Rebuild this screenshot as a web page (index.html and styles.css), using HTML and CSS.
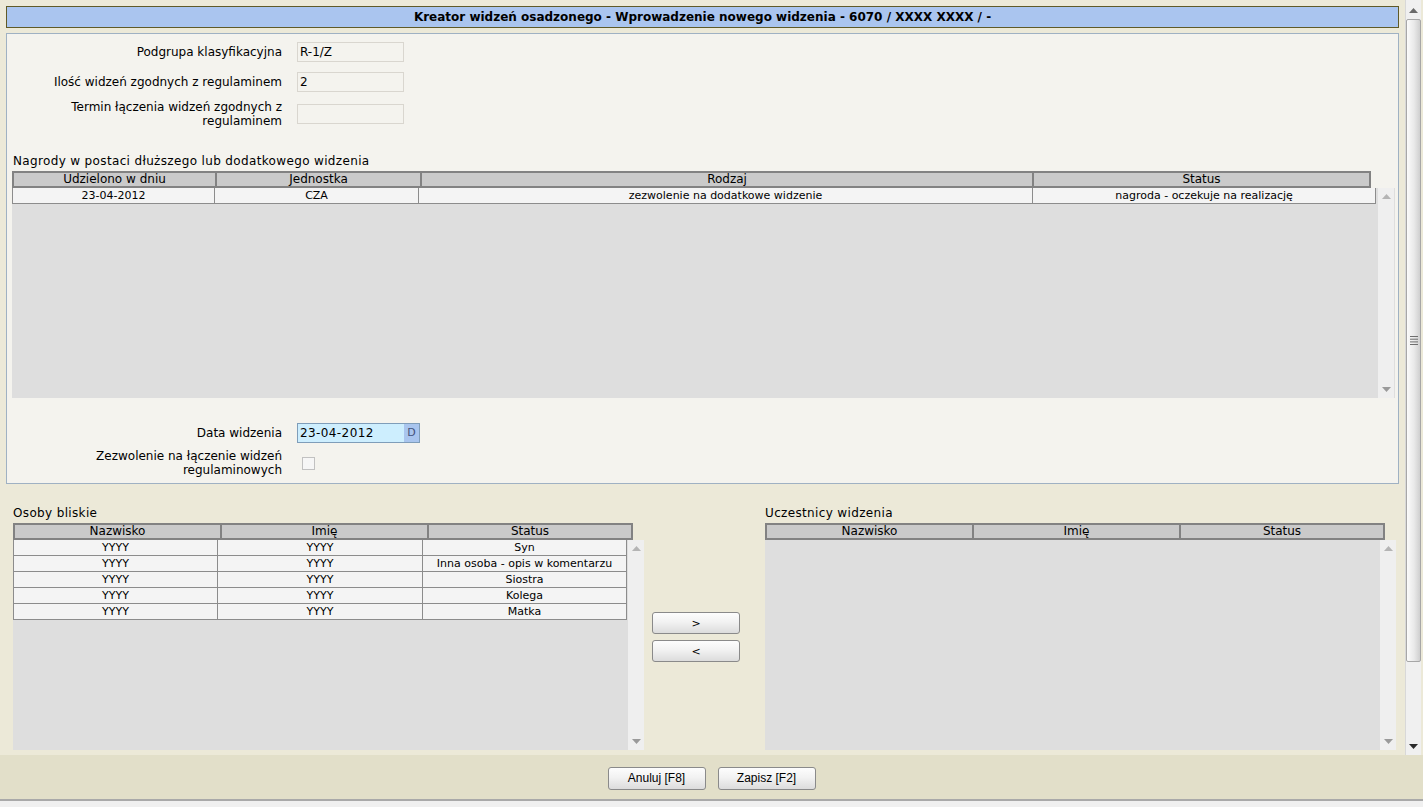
FILE: index.html
```html
<!DOCTYPE html>
<html lang="pl">
<head>
<meta charset="utf-8">
<title>Kreator widzeń osadzonego</title>
<link rel="stylesheet" href="styles.css">
</head>
<body>
<div class="window">
  <div class="main">
    <div class="content">
      <div class="title">Kreator widzeń osadzonego - Wprowadzenie nowego widzenia - 6070 / XXXX XXXX / -</div>
      <div class="panel">
        <div class="frow r1">
          <div class="flabel">Podgrupa klasyfikacyjna</div>
          <div class="finput">R-1/Z</div>
        </div>
        <div class="frow r2">
          <div class="flabel">Ilość widzeń zgodnych z regulaminem</div>
          <div class="finput">2</div>
        </div>
        <div class="frow r3">
          <div class="flabel">Termin łączenia widzeń zgodnych z regulaminem</div>
          <div class="finput"></div>
        </div>
        <div class="seclabel sec-top">Nagrody w postaci dłuższego lub dodatkowego widzenia</div>
        <div class="grid grid-awards">
          <div class="ghead">
            <div class="gh" style="width:201px">Udzielono w dniu</div>
            <div class="gh" style="width:203px">Jednostka</div>
            <div class="gh" style="width:610px">Rodzaj</div>
            <div class="gh gh-last">Status</div>
          </div>
          <div class="gbody">
            <div class="grows">
              <div class="gr">
                <div class="gc" style="width:202px">23-04-2012</div>
                <div class="gc" style="width:204px">CZA</div>
                <div class="gc" style="width:614px">zezwolenie na dodatkowe widzenie</div>
                <div class="gc gc-last">nagroda - oczekuje na realizację</div>
              </div>
            </div>
            <div class="gscroll">
              <svg class="arr" width="9" height="5" viewBox="0 0 9 5"><polygon points="4.5,0 9,5 0,5" fill="#b4b4b4"/></svg>
              <svg class="arr" width="9" height="5" viewBox="0 0 9 5"><polygon points="0,0 9,0 4.5,5" fill="#9a9a9a"/></svg>
            </div>
          </div>
        </div>
        <div class="frow r4">
          <div class="flabel">Data widzenia</div>
          <div class="dinput"><span class="dval">23-04-2012</span><span class="dbtn">D</span></div>
        </div>
        <div class="frow r5">
          <div class="flabel">Zezwolenie na łączenie widzeń regulaminowych</div>
          <div class="chk"></div>
        </div>
      </div>

      <div class="lower">
        <div class="lcol">
          <div class="seclabel">Osoby bliskie</div>
          <div class="grid grid-small">
            <div class="ghead">
              <div class="gh" style="width:205px">Nazwisko</div>
              <div class="gh" style="width:205px">Imię</div>
              <div class="gh gh-last">Status</div>
            </div>
            <div class="gbody">
              <div class="grows">
                <div class="gr"><div class="gc" style="width:204px">YYYY</div><div class="gc" style="width:205px">YYYY</div><div class="gc gc-last">Syn</div></div>
                <div class="gr"><div class="gc" style="width:204px">YYYY</div><div class="gc" style="width:205px">YYYY</div><div class="gc gc-last">Inna osoba - opis w komentarzu</div></div>
                <div class="gr"><div class="gc" style="width:204px">YYYY</div><div class="gc" style="width:205px">YYYY</div><div class="gc gc-last">Siostra</div></div>
                <div class="gr"><div class="gc" style="width:204px">YYYY</div><div class="gc" style="width:205px">YYYY</div><div class="gc gc-last">Kolega</div></div>
                <div class="gr"><div class="gc" style="width:204px">YYYY</div><div class="gc" style="width:205px">YYYY</div><div class="gc gc-last">Matka</div></div>
              </div>
              <div class="gscroll">
                <svg class="arr" width="9" height="5" viewBox="0 0 9 5"><polygon points="4.5,0 9,5 0,5" fill="#b4b4b4"/></svg>
                <svg class="arr" width="9" height="5" viewBox="0 0 9 5"><polygon points="0,0 9,0 4.5,5" fill="#9a9a9a"/></svg>
              </div>
            </div>
          </div>
        </div>
        <div class="mcol">
          <button class="btn mbtn">&gt;</button>
          <button class="btn mbtn">&lt;</button>
        </div>
        <div class="rcol">
          <div class="seclabel">Uczestnicy widzenia</div>
          <div class="grid grid-small">
            <div class="ghead">
              <div class="gh" style="width:205px">Nazwisko</div>
              <div class="gh" style="width:205px">Imię</div>
              <div class="gh gh-last">Status</div>
            </div>
            <div class="gbody">
              <div class="grows"></div>
              <div class="gscroll">
                <svg class="arr" width="9" height="5" viewBox="0 0 9 5"><polygon points="4.5,0 9,5 0,5" fill="#b4b4b4"/></svg>
                <svg class="arr" width="9" height="5" viewBox="0 0 9 5"><polygon points="0,0 9,0 4.5,5" fill="#9a9a9a"/></svg>
              </div>
            </div>
          </div>
        </div>
      </div>
    </div>
    <div class="vscroll">
      <svg class="varr" width="9" height="5" viewBox="0 0 9 5"><polygon points="4.5,0 9,5 0,5" fill="#6a6a6a"/></svg>
      <div class="thumb">
        <svg width="8" height="9" viewBox="0 0 8 9"><g fill="#6e6e6e"><rect x="0" y="0" width="8" height="1"/><rect x="0" y="2.7" width="8" height="1"/><rect x="0" y="5.4" width="8" height="1"/><rect x="0" y="8" width="8" height="1"/></g></svg>
      </div>
      <svg class="varr" width="9" height="5" viewBox="0 0 9 5"><polygon points="0,0 9,0 4.5,5" fill="#2a2a2a"/></svg>
    </div>
  </div>
  <div class="footer">
    <button class="btn fbtn">Anuluj [F8]</button>
    <button class="btn fbtn">Zapisz [F2]</button>
  </div>
  <div class="status"></div>
</div>
</body>
</html>
```
FILE: styles.css
```css
html, body {
  margin: 0;
  padding: 0;
}
body {
  background: #ECE9D8;
  font-family: "DejaVu Sans", Verdana, sans-serif;
  font-size: 12px;
  color: #000;
  width: 1423px;
  height: 807px;
  overflow: hidden;
}
.window {
  display: flex;
  flex-direction: column;
  height: 807px;
}
.main {
  display: flex;
  height: 755px;
  flex: none;
}
.content {
  width: 1405px;
  padding: 6px 0 0 6px;
  box-sizing: border-box;
}
.title {
  width: 1393px;
  height: 22px;
  box-sizing: border-box;
  border: 1px solid #5f5a28;
  background: #AAC5EF;
  text-align: center;
  font-weight: bold;
  line-height: 20px;
  font-size: 12px;
}
.panel {
  width: 1393px;
  height: 451px;
  box-sizing: border-box;
  margin-top: 5px;
  border: 1px solid #9fb1c3;
  background: #F4F3EE;
  padding: 8px 0 0 0;
}
.frow {
  display: flex;
  align-items: center;
}
.r1, .r2, .r4 { height: 20px; }
.r2 { margin-top: 10px; }
.r3 { margin-top: 8px; height: 28px; }
.r4 { margin-top: 25px; }
.r5 { margin-top: 6px; height: 28px; }
.flabel {
  width: 275px;
  margin-right: 15px;
  text-align: right;
  line-height: 14px;
}
.finput {
  width: 107px;
  height: 20px;
  box-sizing: border-box;
  border: 1px solid #d9d6cf;
  background: #F4F3EE;
  padding-left: 2px;
  line-height: 18px;
}
.dinput {
  width: 123px;
  height: 20px;
  box-sizing: border-box;
  border: 1px solid #7f9db9;
  background: #CDEEFE;
  display: flex;
  line-height: 18px;
}
.dval {
  flex: 1;
  padding-left: 2px;
  letter-spacing: 0.4px;
}
.dbtn {
  width: 15px;
  background: #A9C5EE;
  color: #44527c;
  text-align: center;
  font-size: 11px;
}
.chk {
  width: 13px;
  height: 13px;
  box-sizing: border-box;
  border: 1px solid #c1c1c1;
  background: #f6f6f6;
  margin-left: 5px;
}
.seclabel {
  height: 18px;
  line-height: 18px;
  margin-bottom: 1px;
  letter-spacing: 0.35px;
}
.sec-top {
  margin-top: 24px;
  margin-left: 6px;
}
.grid-awards {
  margin-left: 5px;
  width: 1383px;
}
.ghead {
  display: flex;
  height: 17px;
  box-sizing: border-box;
  border: 2px solid #828282;
  background: #CACACA;
  line-height: 13px;
  font-size: 12px;
}
.grid-awards .ghead { width: 1359px; }
.grid-small .ghead { width: 620px; }
.gh {
  text-align: center;
  border-right: 2px solid #828282;
  white-space: nowrap;
  overflow: hidden;
}
.gh-last {
  flex: 1;
  border-right: 0;
}
.gbody {
  display: flex;
  background: #DEDEDE;
}
.grid-awards .gbody { height: 210px; }
.grid-small .gbody { height: 210px; }
.grows {
  display: flex;
  flex-direction: column;
}
.grid-awards .grows { width: 1364px; }
.grid-small .grows { width: 614px; }
.gr {
  display: flex;
  height: 16px;
  box-sizing: border-box;
  background: #F4F4F4;
  border: 1px solid #8c8c8c;
  border-top: 0;
  font-size: 11px;
  line-height: 15px;
}
.gc {
  text-align: center;
  border-right: 1px solid #8c8c8c;
  box-sizing: border-box;
  white-space: nowrap;
  overflow: hidden;
}
.gc-last {
  flex: 1;
  border-right: 0;
}
.gscroll {
  width: 16px;
  margin-left: 2px;
  background: #EFEFEF;
  display: flex;
  flex-direction: column;
  justify-content: space-between;
  align-items: center;
  padding: 6px 0 6px;
  box-sizing: border-box;
}
.grid-small .gscroll { margin-left: 1px; }
.lower {
  display: flex;
  margin-top: 20px;
  margin-left: 7px;
}
.lcol, .rcol {
  width: 631px;
}
.mcol {
  width: 88px;
  margin: 0 25px 0 8px;
  padding-top: 108px;
  display: flex;
  flex-direction: column;
  gap: 6px;
}
.btn {
  box-sizing: border-box;
  border: 1px solid #8a8a8a;
  border-radius: 3px;
  background: linear-gradient(#fdfdfd, #f2f2f2 45%, #dcdcdc);
  color: #000;
  padding: 0;
  margin: 0;
}
.mbtn {
  width: 88px;
  height: 22px;
  font-family: "DejaVu Sans", Verdana, sans-serif;
  font-size: 11px;
}
.vscroll {
  width: 16px;
  background: #F0F0F0;
  border-left: 1px solid #d8d8d8;
  display: flex;
  flex-direction: column;
  align-items: center;
  padding: 8px 0 6px;
  box-sizing: border-box;
}
.thumb {
  width: 15px;
  margin: 6px 0 auto;
  height: 643px;
  box-sizing: border-box;
  border: 1px solid #a7a7a7;
  border-radius: 2px;
  background: linear-gradient(90deg, #fbfbfb, #e9e9e9 55%, #cfcfcf);
  display: flex;
  align-items: center;
  justify-content: center;
}
.varr { flex: none; }
.footer {
  height: 44px;
  flex: none;
  background: #E2DFC9;
  display: flex;
  justify-content: center;
  align-items: center;
  gap: 12px;
  padding-top: 2px;
  box-sizing: border-box;
}
.fbtn {
  width: 98px;
  height: 23px;
  font-family: "Liberation Sans", Arial, sans-serif;
  font-size: 12px;
}
.status {
  height: 8px;
  flex: none;
  box-sizing: border-box;
  border-top: 2px solid #a9a9a9;
  background: #F0F0F0;
}
```
